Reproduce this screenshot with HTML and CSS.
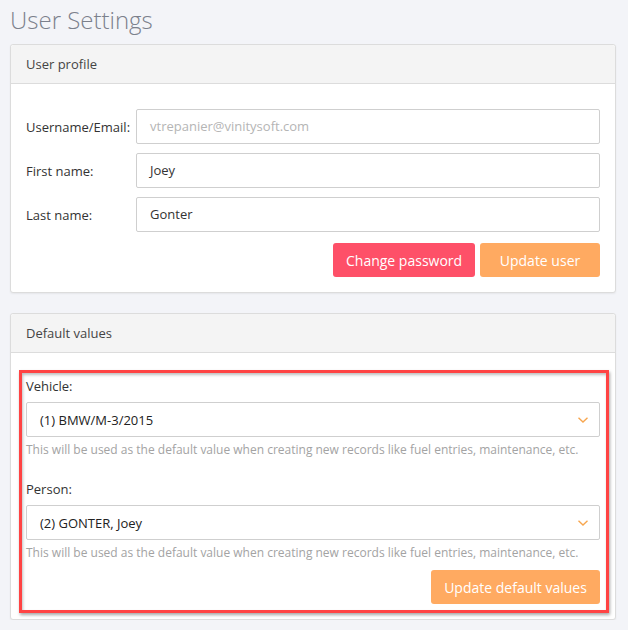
FILE: index.html
```html
<!DOCTYPE html>
<html>
<head>
<meta charset="utf-8">
<link rel="stylesheet" href="styles.css">
</head>
<body>
<div class="page">
  <h1 class="title">User Settings</h1>

  <section class="card">
    <div class="card-header">User profile</div>
    <div class="card-body">
      <div class="row">
        <label class="row-label">Username/Email:</label>
        <div class="input input-muted">vtrepanier@vinitysoft.com</div>
      </div>
      <div class="row">
        <label class="row-label">First name:</label>
        <div class="input">Joey</div>
      </div>
      <div class="row">
        <label class="row-label">Last name:</label>
        <div class="input">Gonter</div>
      </div>
      <div class="actions">
        <button class="btn btn-danger">Change password</button>
        <button class="btn btn-warning">Update user</button>
      </div>
    </div>
  </section>

  <section class="card card-second">
    <div class="card-header">Default values</div>
    <div class="card-body card-body-rel">
      <div class="group">
        <div class="group-label">Vehicle:</div>
        <div class="select">
          <span>(1) BMW/M-3/2015</span>
          <svg class="chev" width="12" height="8" viewBox="0 0 12 8"><path d="M1.5 1.8 L6 6 L10.5 1.8" fill="none" stroke="#f7a64f" stroke-width="1.4"/></svg>
        </div>
        <div class="help">This will be used as the default value when creating new records like fuel entries, maintenance, etc.</div>
      </div>
      <div class="group group-second">
        <div class="group-label">Person:</div>
        <div class="select">
          <span>(2) GONTER, Joey</span>
          <svg class="chev" width="12" height="8" viewBox="0 0 12 8"><path d="M1.5 1.8 L6 6 L10.5 1.8" fill="none" stroke="#f7a64f" stroke-width="1.4"/></svg>
        </div>
        <div class="help">This will be used as the default value when creating new records like fuel entries, maintenance, etc.</div>
      </div>
      <div class="actions actions-second">
        <button class="btn btn-warning">Update default values</button>
      </div>
      <div class="highlight"></div>
    </div>
  </section>
</div>
</body>
</html>
```

FILE: styles.css
```css
html, body {
  margin: 0;
  padding: 0;
  background: #f3f4f8;
}
body {
  font-family: "Open Sans", "Noto Sans", sans-serif;
  color: #333;
  font-size: 13px;
}
.page {
  width: 606px;
  padding: 5px 0 0 10px;
}
.title {
  margin: 0 0 9px 0;
  font-size: 24px;
  font-weight: 300;
  line-height: 30px;
  color: #7b808c;
}
.card {
  background: #fff;
  border: 1px solid #dcdcdc;
  border-radius: 3px;
  box-shadow: 0 1px 2px rgba(0,0,0,0.06);
}
.card-second {
  margin-top: 20px;
}
.card-header {
  background: #f4f4f4;
  height: 38px;
  line-height: 38px;
  padding: 0 15px;
  border-bottom: 1px solid #dcdcdc;
  border-radius: 3px 3px 0 0;
  color: #444;
}
.card-body {
  padding: 25px 15px 15px 15px;
}
.card-body-rel {
  position: relative;
  padding-top: 24px;
}
.row {
  display: flex;
  align-items: center;
  margin-bottom: 9px;
}
.row-label {
  width: 110px;
  flex: none;
  color: #333;
}
.input {
  flex: 1;
  height: 33px;
  line-height: 33px;
  border: 1px solid #cfcfcf;
  border-radius: 2px;
  padding: 0 13px;
  color: #333;
  background: #fff;
}
.input-muted {
  color: #b5b5b5;
}
.actions {
  display: flex;
  justify-content: flex-end;
  gap: 5px;
  margin-top: 11px;
}
.btn {
  font-family: "Open Sans", "Noto Sans", sans-serif;
  font-size: 14px;
  color: #fff;
  border: none;
  border-radius: 3px;
  height: 34px;
  padding: 0 13px;
  white-space: nowrap;
  cursor: pointer;
}
.btn-danger {
  background: #fe5068;
  width: 142px;
}
.btn-warning {
  background: #ffaa61;
}
.actions .btn-warning {
  min-width: 120px;
}
.group-label {
  line-height: 18px;
  margin-bottom: 7px;
  color: #333;
}
.group-second {
  margin-top: 21px;
}
.select {
  height: 33px;
  border: 1px solid #cfcfcf;
  border-radius: 2px;
  display: flex;
  align-items: center;
  justify-content: space-between;
  padding: 0 10px 0 13px;
  color: #222;
}
.help {
  margin-top: 4px;
  line-height: 18px;
  font-size: 12px;
  color: #a3a3a3;
}
.actions-second {
  margin-top: 8px;
}
.actions-second .btn-warning {
  width: 169px;
}
.highlight {
  position: absolute;
  left: 8px;
  top: 17px;
  right: 6px;
  bottom: 6px;
  border: 3px solid #ff4343;
  box-shadow: 1px 2px 3px rgba(0,0,0,0.35), inset 1px 2px 3px rgba(0,0,0,0.25);
  pointer-events: none;
}
```
